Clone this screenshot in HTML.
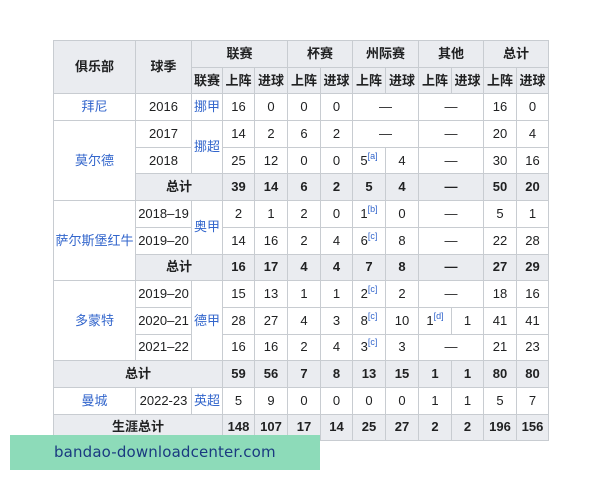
<!DOCTYPE html>
<html><head><meta charset="utf-8"><style>
body{margin:0;width:600px;height:480px;background:#fff;position:relative;overflow:hidden;font-family:"Liberation Sans","Noto Sans CJK SC",sans-serif;}
table{position:absolute;left:53px;top:40px;border-collapse:collapse;table-layout:fixed;font-size:13px;color:#202122;}
td,th{border:1px solid #c8ccd1;text-align:center;padding:0;height:25.7px;line-height:16px;white-space:nowrap}
th{background:#eaecf0;font-weight:bold}
tr.t td{background:#eaecf0;font-weight:bold}
a{color:#3366cc;text-decoration:none}
sup{font-size:9px;color:#3366cc;vertical-align:6px;line-height:0}
.wm{position:absolute;left:10px;top:435px;width:310px;height:35px;background:#8ddbb9;color:#1a3a80;font-size:15px;line-height:35px;box-sizing:border-box;padding-left:44px;font-family:"DejaVu Sans","Liberation Sans",sans-serif;letter-spacing:0.15px}
</style></head><body>
<table>
<colgroup><col style="width:82px"><col style="width:56px"><col style="width:31px"><col style="width:32px"><col style="width:33px"><col style="width:33px"><col style="width:32px"><col style="width:33px"><col style="width:33px"><col style="width:33px"><col style="width:32px"><col style="width:33px"><col style="width:32px"></colgroup>
<tr><th rowspan="2">俱乐部</th><th rowspan="2">球季</th><th colspan="3">联赛</th><th colspan="2">杯赛</th><th colspan="2">州际赛</th><th colspan="2">其他</th><th colspan="2">总计</th></tr>
<tr><th>联赛</th><th>上阵</th><th>进球</th><th>上阵</th><th>进球</th><th>上阵</th><th>进球</th><th>上阵</th><th>进球</th><th>上阵</th><th>进球</th></tr>
<tr><td><a>拜尼</a></td><td>2016</td><td><a>挪甲</a></td><td>16</td><td>0</td><td>0</td><td>0</td><td colspan="2">—</td><td colspan="2">—</td><td>16</td><td>0</td></tr>
<tr><td rowspan="3"><a>莫尔德</a></td><td>2017</td><td rowspan="2"><a>挪超</a></td><td>14</td><td>2</td><td>6</td><td>2</td><td colspan="2">—</td><td colspan="2">—</td><td>20</td><td>4</td></tr>
<tr><td>2018</td><td>25</td><td>12</td><td>0</td><td>0</td><td>5<sup>[a]</sup></td><td>4</td><td colspan="2">—</td><td>30</td><td>16</td></tr>
<tr class="t"><td colspan="2">总计</td><td>39</td><td>14</td><td>6</td><td>2</td><td>5</td><td>4</td><td colspan="2">—</td><td>50</td><td>20</td></tr>
<tr><td rowspan="3"><a>萨尔斯堡红牛</a></td><td>2018–19</td><td rowspan="2"><a>奥甲</a></td><td>2</td><td>1</td><td>2</td><td>0</td><td>1<sup>[b]</sup></td><td>0</td><td colspan="2">—</td><td>5</td><td>1</td></tr>
<tr><td>2019–20</td><td>14</td><td>16</td><td>2</td><td>4</td><td>6<sup>[c]</sup></td><td>8</td><td colspan="2">—</td><td>22</td><td>28</td></tr>
<tr class="t"><td colspan="2">总计</td><td>16</td><td>17</td><td>4</td><td>4</td><td>7</td><td>8</td><td colspan="2">—</td><td>27</td><td>29</td></tr>
<tr><td rowspan="3"><a>多蒙特</a></td><td>2019–20</td><td rowspan="3"><a>德甲</a></td><td>15</td><td>13</td><td>1</td><td>1</td><td>2<sup>[c]</sup></td><td>2</td><td colspan="2">—</td><td>18</td><td>16</td></tr>
<tr><td>2020–21</td><td>28</td><td>27</td><td>4</td><td>3</td><td>8<sup>[c]</sup></td><td>10</td><td>1<sup>[d]</sup></td><td>1</td><td>41</td><td>41</td></tr>
<tr><td>2021–22</td><td>16</td><td>16</td><td>2</td><td>4</td><td>3<sup>[c]</sup></td><td>3</td><td colspan="2">—</td><td>21</td><td>23</td></tr>
<tr class="t"><td colspan="3">总计</td><td>59</td><td>56</td><td>7</td><td>8</td><td>13</td><td>15</td><td>1</td><td>1</td><td>80</td><td>80</td></tr>
<tr><td><a>曼城</a></td><td>2022-23</td><td><a>英超</a></td><td>5</td><td>9</td><td>0</td><td>0</td><td>0</td><td>0</td><td>1</td><td>1</td><td>5</td><td>7</td></tr>
<tr class="t"><td colspan="3">生涯总计</td><td>148</td><td>107</td><td>17</td><td>14</td><td>25</td><td>27</td><td>2</td><td>2</td><td>196</td><td>156</td></tr>
</table>
<div class="wm">bandao-downloadcenter.com</div>
</body></html>
